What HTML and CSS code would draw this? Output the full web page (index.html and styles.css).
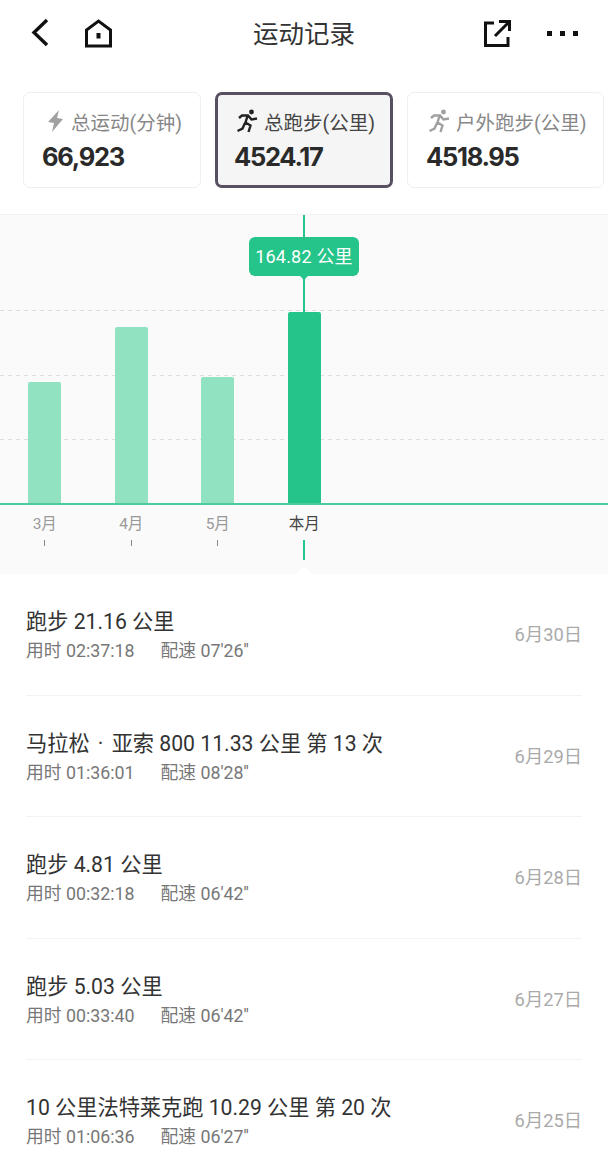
FILE: index.html
```html
<!DOCTYPE html>
<html lang="zh-CN">
  <head>
    <meta charset="UTF-8" />
    <meta name="viewport" content="width=device-width, initial-scale=1.0" />
    <title>运动记录</title>
    <link rel="stylesheet" href="styles.css">
  </head>
  <body>
    <header class="topbar">
      <div class="topbar-left">
        <svg class="icon" width="18" height="30" viewBox="0 0 18 30"><path d="M16 2 L3 14.5 L16 27" fill="none" stroke="#111" stroke-width="3.4"/></svg>
        <svg class="icon" width="27" height="29" viewBox="0 0 27 29"><path d="M1.5 27 V11 L13.5 2 L25.5 11 V27 Z" fill="none" stroke="#111" stroke-width="3"/><rect x="11.5" y="14" width="4" height="5.5" fill="#111"/></svg>
      </div>
      <h1 class="title">运动记录</h1>
      <div class="topbar-right">
        <svg class="icon" width="27" height="27" viewBox="0 0 27 27"><path d="M10 3 H1.5 V25.5 H24 V17" fill="none" stroke="#111" stroke-width="3"/><path d="M11 16 L24 3 M15 1.5 H25.5 V11" fill="none" stroke="#111" stroke-width="3"/></svg>
        <div class="dots"><span></span><span></span><span></span></div>
      </div>
    </header>

    <section class="cards">
      <div class="card">
        <div class="card-label">
          <svg width="20" height="24" viewBox="0 0 20 24"><path d="M14 1 L3 13 L9 14 L7 23 L18 10 L12 9 Z" fill="#a0a0a0"/></svg>
          <span>总运动(分钟)</span>
        </div>
        <div class="card-value">66,923</div>
      </div>
      <div class="card active">
        <div class="card-label">
          <svg class="runner" width="22" height="24" viewBox="0 0 22 24"><circle cx="14.5" cy="3" r="2.4" fill="#222"/><path d="M2 9 L5 6.5 L11 6.5 L14.5 10.5 L20 9.5 M10.5 7 L8.5 13.5 L13.5 16.5 L11.5 23 M8 14 L5.5 19.5 L0.5 22" fill="none" stroke="#222" stroke-width="2.4"/></svg>
          <span>总跑步(公里)</span>
        </div>
        <div class="card-value">4524.17</div>
      </div>
      <div class="card wide">
        <div class="card-label">
          <svg class="runner" width="22" height="24" viewBox="0 0 22 24"><circle cx="14.5" cy="3" r="2.4" fill="#a0a0a0"/><path d="M2 9 L5 6.5 L11 6.5 L14.5 10.5 L20 9.5 M10.5 7 L8.5 13.5 L13.5 16.5 L11.5 23 M8 14 L5.5 19.5 L0.5 22" fill="none" stroke="#a0a0a0" stroke-width="2.4"/></svg>
          <span>户外跑步(公里)</span>
        </div>
        <div class="card-value">4518.95</div>
      </div>
    </section>

    <section class="chart">
      <div class="grid-line line1"></div>
      <div class="grid-line line2"></div>
      <div class="grid-line line3"></div>
      <div class="cursor-top"></div>
      <div class="tip">164.82 公里</div>
      <div class="plot">
        <div class="bar-slot"><div class="bar h1"></div></div>
        <div class="bar-slot"><div class="bar h2"></div></div>
        <div class="bar-slot"><div class="bar h3"></div></div>
        <div class="bar-slot"><div class="bar current h4"></div></div>
      </div>
      <div class="axis">
        <div class="tick-slot"><span>3月</span><i></i></div>
        <div class="tick-slot"><span>4月</span><i></i></div>
        <div class="tick-slot"><span>5月</span><i></i></div>
        <div class="tick-slot current"><span>本月</span><i></i></div>
      </div>
      <div class="notch"></div>
    </section>

    <ul class="records">
      <li class="record">
        <div class="record-main">
          <div class="record-title">跑步 21.16 公里</div>
          <div class="record-sub"><span>用时 02:37:18</span><span>配速 07'26''</span></div>
        </div>
        <div class="record-date">6月30日</div>
      </li>
      <li class="record">
        <div class="record-main">
          <div class="record-title">马拉松 <span class="sep">·</span> 亚索 800 11.33 公里 第 13 次</div>
          <div class="record-sub"><span>用时 01:36:01</span><span>配速 08'28''</span></div>
        </div>
        <div class="record-date">6月29日</div>
      </li>
      <li class="record">
        <div class="record-main">
          <div class="record-title">跑步 4.81 公里</div>
          <div class="record-sub"><span>用时 00:32:18</span><span>配速 06'42''</span></div>
        </div>
        <div class="record-date">6月28日</div>
      </li>
      <li class="record">
        <div class="record-main">
          <div class="record-title">跑步 5.03 公里</div>
          <div class="record-sub"><span>用时 00:33:40</span><span>配速 06'42''</span></div>
        </div>
        <div class="record-date">6月27日</div>
      </li>
      <li class="record">
        <div class="record-main">
          <div class="record-title">10 公里法特莱克跑 10.29 公里 第 20 次</div>
          <div class="record-sub"><span>用时 01:06:36</span><span>配速 06'27''</span></div>
        </div>
        <div class="record-date">6月25日</div>
      </li>
    </ul>
  </body>
</html>
```

FILE: styles.css
```css
html,
body {
  height: 100%;
  overflow: hidden;
}

body {
  margin: 0;
  background: #fff;
  color: #333;
  font-family: Roboto, "Noto Sans CJK SC", sans-serif;
}

.topbar {
  display: flex;
  align-items: center;
  justify-content: space-between;
  height: 66px;
  padding: 0 30px 0 31px;
  position: relative;
}

.topbar-left,
.topbar-right {
  display: flex;
  align-items: center;
}

.topbar-left {
  gap: 36px;
}

.topbar-right {
  gap: 36px;
}

.icon {
  display: block;
}

.title {
  position: absolute;
  left: 0;
  right: 0;
  margin: 0 0 4px;
  text-align: center;
  font-size: 25.5px;
  font-weight: 400;
  color: #333;
}

.dots {
  display: flex;
  gap: 8px;
}

.dots span {
  width: 5px;
  height: 5px;
  background: #111;
}

.cards {
  display: flex;
  gap: 14px;
  padding: 26px 4px 0 23px;
}

.card {
  box-sizing: border-box;
  width: 178px;
  height: 96px;
  padding: 14px 0 0 18px;
  border: 1px solid #efefef;
  border-radius: 7px;
  background: #fff;
}

.card.wide {
  width: 197px;
}

.card.active {
  border: 3px solid #565061;
  background: #f5f5f5;
  padding: 12px 0 0 16px;
}

.card-label {
  display: flex;
  align-items: center;
  gap: 6px;
  height: 28px;
  margin-left: 3px;
  font-size: 19.5px;
  color: #888;
}

.runner {
  margin-right: -1px;
}

.card.active .card-label {
  color: #444;
}

.card-value {
  margin-top: 4px;
  font-family: Inter, sans-serif;
  font-size: 25.5px;
  letter-spacing: -1.3px;
  line-height: 36px;
  font-weight: 700;
  color: #2a2a2a;
}

.chart {
  position: relative;
  height: 360px;
  margin-top: 26px;
  background: #fafafa;
  border-top: 1px solid #f2f2f2;
  box-sizing: border-box;
}

.grid-line {
  position: absolute;
  left: 0;
  right: 0;
  height: 1px;
  background: repeating-linear-gradient(90deg, #dedede 0 4px, transparent 4px 8px);
}

.line1 { top: 95px; }
.line2 { top: 160px; }
.line3 { top: 224px; }

.cursor-top {
  position: absolute;
  left: 303px;
  top: 0;
  width: 2px;
  height: 100px;
  background: #25c48a;
}

.tip {
  position: absolute;
  left: 249px;
  top: 22px;
  width: 110px;
  height: 39px;
  line-height: 39px;
  text-align: center;
  border-radius: 6px;
  background: #25c48a;
  color: #fff;
  font-size: 18px;
  letter-spacing: 0.2px;
}

.tip::after {
  content: "";
  position: absolute;
  left: 50%;
  bottom: -4px;
  margin-left: -5px;
  border: 5px solid transparent;
  border-bottom: 0;
  border-top-color: #25c48a;
}

.plot {
  position: relative;
  display: flex;
  align-items: flex-end;
  height: 288px;
  padding-left: 1.5px;
  border-bottom: 2px solid #4ccb9c;
}

.bar-slot {
  display: flex;
  justify-content: center;
  width: 86.5px;
}

.bar {
  width: 33px;
  background: #90e2c0;
  border-radius: 2px 2px 0 0;
}

.bar.current {
  background: #25c48a;
}

.h1 { height: 121px; }
.h2 { height: 176px; }
.h3 { height: 126px; }
.h4 { height: 191px; }

.axis {
  display: flex;
  padding-left: 1.5px;
}

.tick-slot {
  display: flex;
  flex-direction: column;
  align-items: center;
  width: 86.5px;
  padding-top: 8px;
  font-size: 15.5px;
  color: #999;
}

.tick-slot span {
  line-height: 22px;
}

.tick-slot i {
  width: 1px;
  height: 6px;
  margin-top: 5px;
  background: #888;
}

.tick-slot.current {
  color: #444;
}

.tick-slot.current i {
  width: 2px;
  height: 20px;
  background: #25c48a;
}

.notch {
  position: absolute;
  left: 296px;
  bottom: 0;
  border: 8px solid transparent;
  border-top: 0;
  border-bottom-color: #fff;
}

.records {
  list-style: none;
  margin: 0;
  padding: 0 26px;
}

.record {
  display: flex;
  align-items: center;
  justify-content: space-between;
  box-sizing: border-box;
  height: 121.5px;
  border-bottom: 1px solid #f3f3f3;
}

.record-main {
  padding-top: 4px;
}

.record-title {
  font-size: 21.2px;
  line-height: 30px;
  color: #333;
}

.sep {
  padding: 0 3px;
}

.record-sub {
  display: flex;
  gap: 26px;
  font-size: 17.8px;
  line-height: 28px;
  color: #777;
}

.record-date {
  margin-bottom: 2px;
  font-size: 18.3px;
  color: #aaa;
}
```
